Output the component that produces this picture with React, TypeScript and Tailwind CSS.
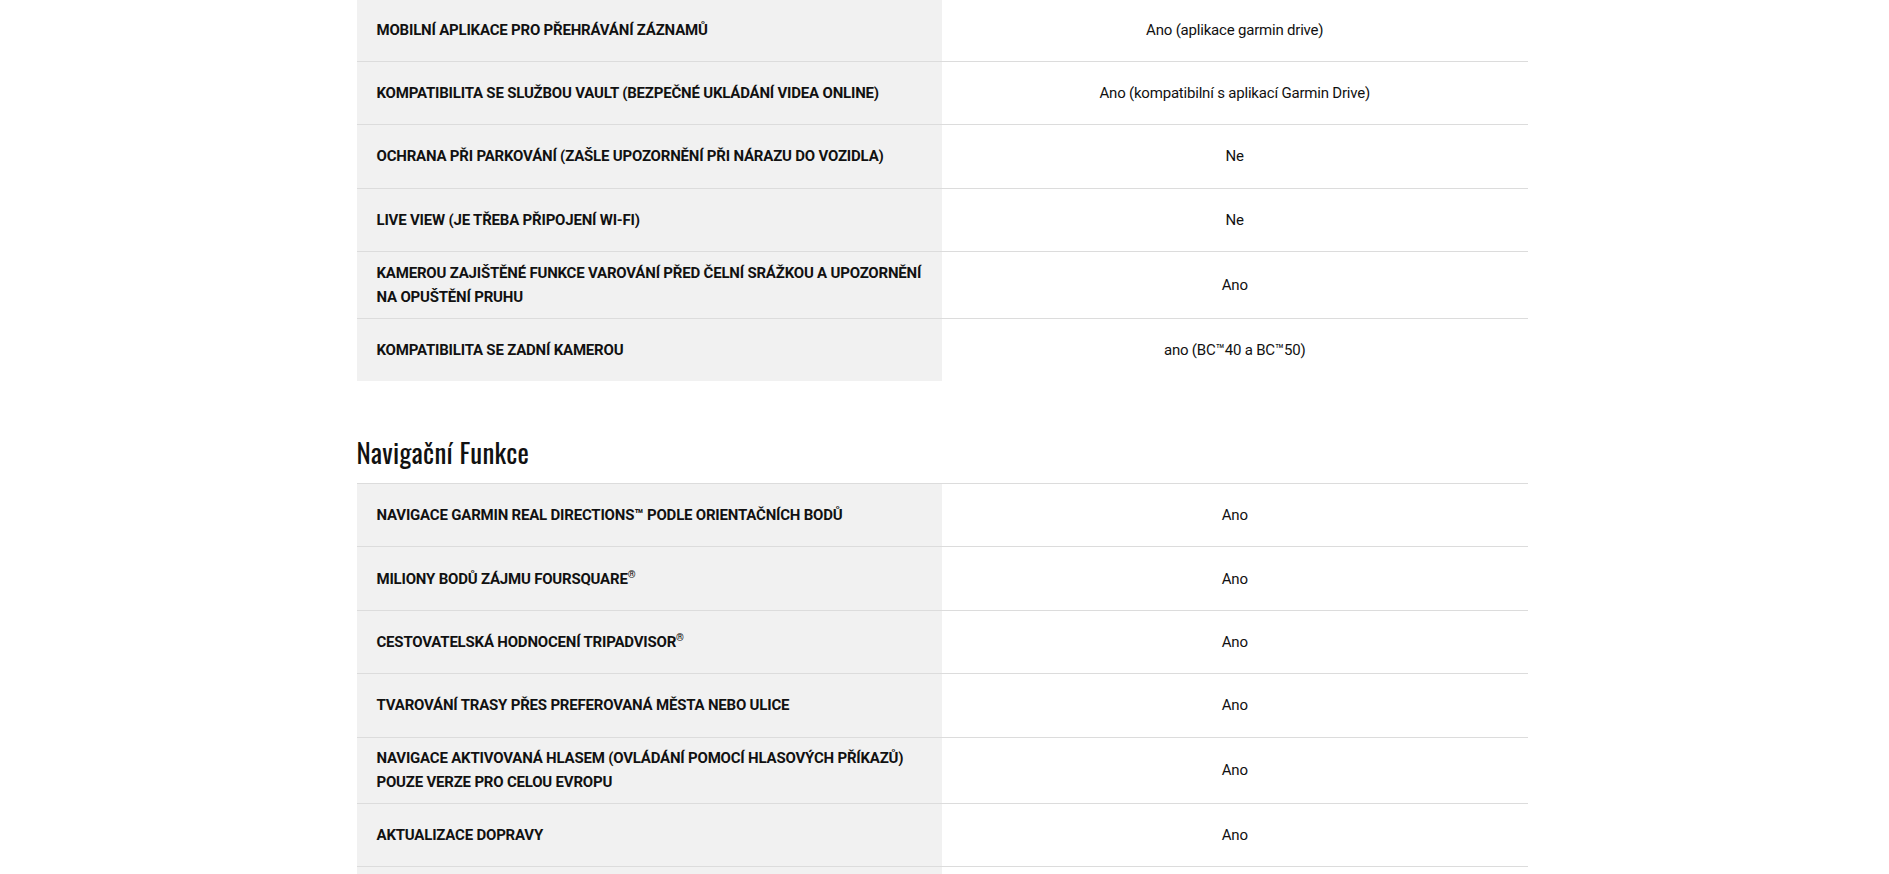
import React from "react";

type Row = { label: string; value: string };

const table1: Row[] = [
  { label: "Mobilní aplikace pro přehrávání záznamů", value: "Ano (aplikace garmin drive)" },
  { label: "Kompatibilita se službou Vault (bezpečné ukládání videa online)", value: "Ano (kompatibilní s aplikací Garmin Drive)" },
  { label: "Ochrana při parkování (zašle upozornění při nárazu do vozidla)", value: "Ne" },
  { label: "Live View (je třeba připojení Wi-Fi)", value: "Ne" },
  { label: "Kamerou zajištěné funkce varování před čelní srážkou a upozornění na opuštění pruhu", value: "Ano" },
  { label: "Kompatibilita se zadní kamerou", value: "ano (BC™40 a BC™50)" },
];

const table2: Row[] = [
  { label: "Navigace Garmin Real Directions™ podle orientačních bodů", value: "Ano" },
  { label: "Miliony bodů zájmu Foursquare®", value: "Ano" },
  { label: "Cestovatelská hodnocení TripAdvisor®", value: "Ano" },
  { label: "Tvarování trasy přes preferovaná města nebo ulice", value: "Ano" },
  { label: "Navigace aktivovaná hlasem (ovládání pomocí hlasových příkazů) pouze verze pro celou Evropu", value: "Ano" },
  { label: "Aktualizace dopravy", value: "Ano" },
  { label: "Garmin Live Traffic", value: "Ano" },
];

function Label({ text }: { text: string }) {
  const parts = text.split("®");
  return (
    <>
      {parts.map((p, i) => (
        <React.Fragment key={i}>
          {p}
          {i < parts.length - 1 && (
            <span className="align-super text-[10px] leading-none">®</span>
          )}
        </React.Fragment>
      ))}
    </>
  );
}

function SpecRow({ row }: { row: Row }) {
  return (
    <div className="grid grid-cols-2 border-t border-[#dcdcdc]">
      <div className="flex min-h-[62.4px] items-center bg-[#f1f1f1] py-[8.75px] pl-5 pr-5">
        <span className="text-[15px] font-bold uppercase leading-6 tracking-[-0.2px] text-[#111]">
          <Label text={row.label} />
        </span>
      </div>
      <div className="flex items-center justify-center px-5 text-[15px] leading-6 tracking-[-0.2px] text-[#111]">
        {row.value}
      </div>
    </div>
  );
}

export default function App() {
  return (
    <div className="min-h-screen bg-white pr-[5px] font-['Roboto','Liberation_Sans',sans-serif]">
      <div className="mx-auto w-[1171px]">
        <div className="-mt-[2.5px]">
          {table1.map((r, i) => (
            <SpecRow key={i} row={r} />
          ))}
        </div>
        <h2 className="mb-[15px] mt-[56px] font-['Oswald','Liberation_Sans_Narrow','DejaVu_Sans_Condensed',sans-serif] text-[27px] font-normal leading-[31px] tracking-[0.3px] text-[#111]">
          Navigační Funkce
        </h2>
        <div>
          {table2.map((r, i) => (
            <SpecRow key={i} row={r} />
          ))}
        </div>
      </div>
    </div>
  );
}
